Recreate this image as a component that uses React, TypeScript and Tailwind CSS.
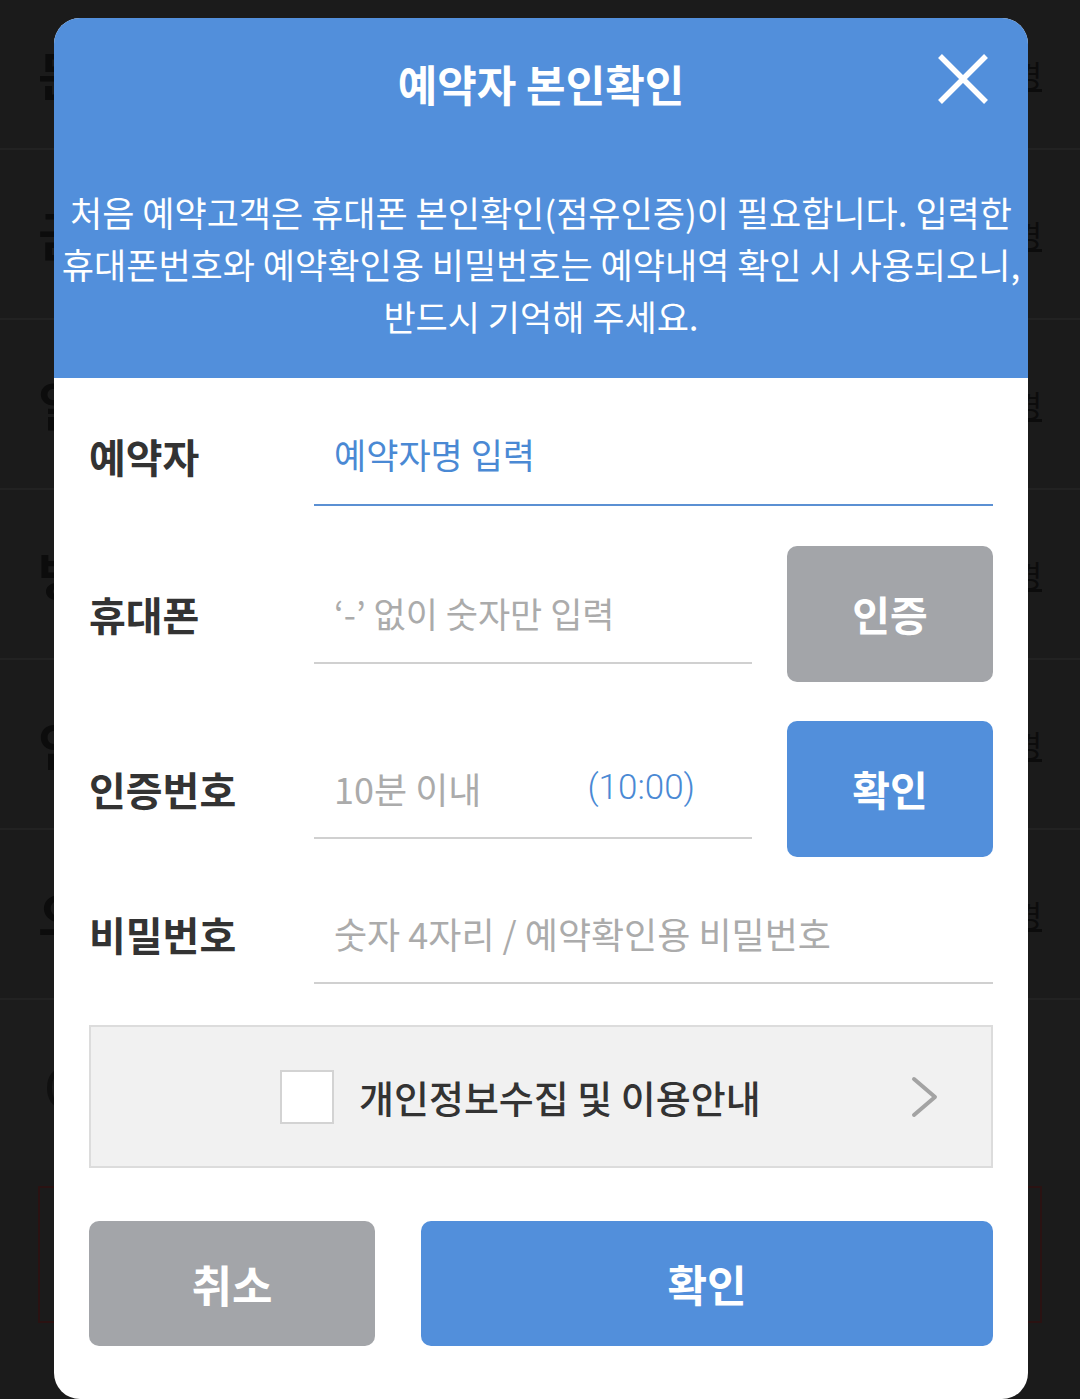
import React from "react";

const FONT = '"Noto Sans CJK KR", "Noto Sans", sans-serif';

function BgRow({ first, left, right }: { first?: boolean; left: string; right: string }) {
  return (
    <div
      className={`${first ? "h-[150px]" : "h-[170px]"} border-b-2 border-[#222222] flex items-center justify-between pl-[38px] pr-[38px]`}
    >
      <span className="text-[52px] font-bold text-[#0c0c0c] leading-none">{left}</span>
      <span className="text-[30px] text-[#0c0c0c] underline leading-none">{right}</span>
    </div>
  );
}

export default function App() {
  return (
    <div className="relative h-[1399px] w-[1080px] overflow-hidden bg-[#1b1b1b]" style={{ fontFamily: FONT }}>
      {/* Dimmed background page */}
      <div className="flex flex-col">
        <BgRow first left="문의" right="변경" />
        <BgRow left="금액" right="변경" />
        <BgRow left="일정" right="변경" />
        <BgRow left="방문" right="변경" />
        <BgRow left="인원" right="변경" />
        <BgRow left="으뜸" right="변경" />
        <div className="h-[170px] flex items-center pl-[44px] bg-[#1c1c1c]">
          <span className="text-[52px] text-[#101010] leading-none">Q</span>
        </div>
        <div className="mx-[38px] mt-[16px] h-[137px] border-2 border-[#2a1212]" />
      </div>

      {/* Modal overlay */}
      <div className="absolute inset-0 pl-[54px] pt-[18px]">
        <div className="w-[974px] overflow-hidden rounded-[26px] bg-white">
          {/* Header */}
          <div className="relative h-[360px] bg-[#528fdb] pt-[39px] text-white">
            <div className="text-center text-[43px] font-bold leading-[52px]">예약자 본인확인</div>
            <button className="absolute right-[39px] top-[35px] h-[52px] w-[52px]" aria-label="닫기">
              <svg viewBox="0 0 52 52" className="h-[52px] w-[52px]">
                <path d="M3 3 L49 49 M49 3 L3 49" stroke="white" strokeWidth="5.5" fill="none" />
              </svg>
            </button>
            <div className="mt-[77px] text-center text-[35px] leading-[52px] whitespace-nowrap">
              <div>처음 예약고객은 휴대폰 본인확인(점유인증)이 필요합니다. 입력한</div>
              <div>휴대폰번호와 예약확인용 비밀번호는 예약내역 확인 시 사용되오니,</div>
              <div>반드시 기억해 주세요.</div>
            </div>
          </div>

          {/* Body */}
          <div className="px-[35px] pt-[27px] pb-[53px]">
            {/* Row 1 */}
            <div className="flex items-center">
              <div className="w-[225px] text-[40px] font-bold text-[#333333]">예약자</div>
              <div className="flex h-[101px] flex-1 items-center border-b-2 border-[#5b90d3] pl-[20px] text-[35px] text-[#4a89d4]">
                예약자명 입력
              </div>
            </div>

            {/* Row 2 */}
            <div className="mt-[40px] flex h-[136px] items-center">
              <div className="w-[225px] text-[40px] font-bold text-[#333333]">휴대폰</div>
              <div className="flex h-[100px] w-[438px] items-center border-b-2 border-[#d0d0d0] pl-[20px] text-[35px] text-[#ababab]">
                ‘-’ 없이 숫자만 입력
              </div>
              <button className="ml-[35px] flex h-[136px] w-[206px] items-center justify-center rounded-[10px] bg-[#a3a5a9] text-[41px] font-bold text-white">
                인증
              </button>
            </div>

            {/* Row 3 */}
            <div className="mt-[39px] flex h-[136px] items-center">
              <div className="w-[225px] text-[40px] font-bold text-[#333333]">인증번호</div>
              <div className="flex h-[100px] w-[438px] items-center border-b-2 border-[#d0d0d0] pl-[20px] pr-[57px] text-[36px]">
                <span className="text-[#ababab]">10분 이내</span>
                <span className="ml-auto text-[#4a89d4]" style={{ fontFamily: '"Roboto", "Noto Sans CJK KR", sans-serif', fontWeight: 300, fontSize: "35px" }}>
                  (10:00)
                </span>
              </div>
              <button className="ml-[35px] flex h-[136px] w-[206px] items-center justify-center rounded-[10px] bg-[#528fdb] text-[41px] font-bold text-white">
                확인
              </button>
            </div>

            {/* Row 4 */}
            <div className="mt-[26px] flex items-center">
              <div className="w-[225px] text-[40px] font-bold text-[#333333]">비밀번호</div>
              <div className="flex h-[101px] flex-1 items-center border-b-2 border-[#d0d0d0] pl-[20px] text-[36px] text-[#ababab]">
                숫자 4자리 / 예약확인용 비밀번호
              </div>
            </div>

            {/* Agreement */}
            <div className="relative mt-[41px] flex h-[143px] items-center border-2 border-[#dcdcdc] bg-[#f1f1f1] pl-[189px]">
              <div className="h-[54px] w-[54px] border-2 border-[#d3d3d3] bg-white" />
              <div className="ml-[25px] text-[38px] font-medium text-[#333333]">개인정보수집 및 이용안내</div>
              <svg viewBox="0 0 30 42" className="absolute right-[51px] top-1/2 h-[42px] w-[30px] -translate-y-1/2">
                <path d="M4 3 L25 21 L4 39" stroke="#a3a3a3" strokeWidth="4" fill="none" strokeLinecap="round" strokeLinejoin="round" />
              </svg>
            </div>

            {/* Buttons */}
            <div className="mt-[53px] flex gap-[46px]">
              <button className="flex h-[125px] w-[286px] items-center justify-center rounded-[10px] bg-[#a3a5a9] text-[44px] font-bold text-white">
                취소
              </button>
              <button className="flex h-[125px] flex-1 items-center justify-center rounded-[10px] bg-[#528fdb] text-[43px] font-bold text-white">
                확인
              </button>
            </div>
          </div>
        </div>
      </div>
    </div>
  );
}
